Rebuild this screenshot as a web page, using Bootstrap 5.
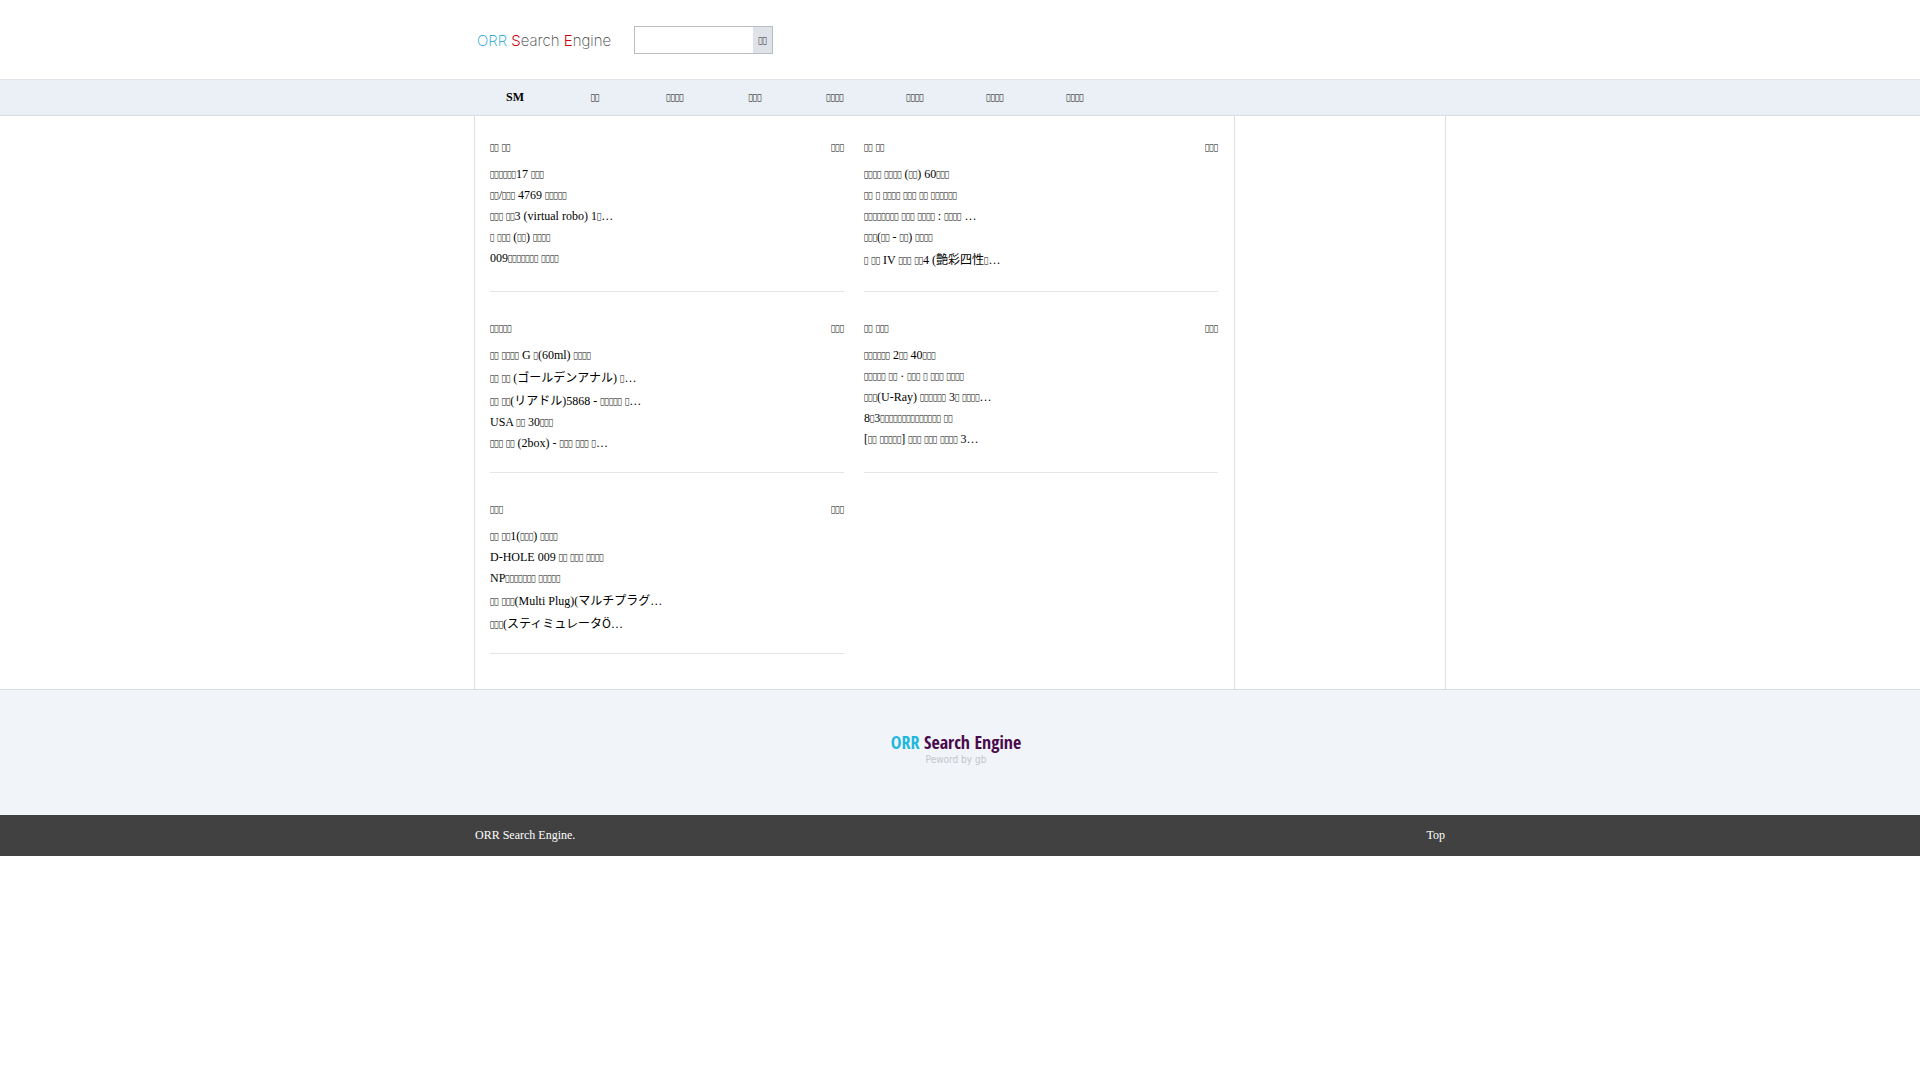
<!DOCTYPE html>
<html lang="ko">
<head>
<meta charset="utf-8">
<meta name="viewport" content="width=device-width, initial-scale=1">
<title>ORR Search Engine</title>
<link rel="stylesheet" href="https://cdn.jsdelivr.net/npm/bootstrap@5.3.0/dist/css/bootstrap.min.css">
<style>
body{font:12px/21px "Liberation Serif","Noto Sans CJK JP",serif;color:#000;background:#fff}
a{color:inherit;text-decoration:none}
.hg{font-family:"DejaVu Sans Condensed","DejaVu Sans",sans-serif;font-size:8px;line-height:1;vertical-align:1px;font-weight:400}
.wrap{width:100%;max-width:972px;margin:0 auto;padding:0 1px}
.top-area{padding:26px 0 25px}
.logo-top{font:200 15px/20px Inter,sans-serif;color:#444;padding:2px 0 0 2px;width:159px}
.logo-top .c-blue{color:#0a9fd8}
.logo-top .c-red{color:#d00010;font-weight:300}
.search-box{width:139px;height:28px;border:1px solid #b9bdc3}
.search-box input{width:118px;min-width:0;border:0;outline:0;padding:0 6px;background:#fff}
.search-box button{flex:0 0 19px;border:0;padding:0;background:#dfe3e9;color:#222}
.menu-bar{background:#ebeff6;border-top:1px solid #dfe3e8;border-bottom:1px solid #d8dde2}
.menu-bar a{width:80px;line-height:35px;text-align:center}
.frame{border:solid #dddfe3;border-width:0 1px;padding:0}
.main-col{flex:1;min-width:0;border-right:1px solid #dddfe3;padding:21px 16px 9px 15px;column-gap:20px}
.side-col{width:210px}
.board{flex:0 0 calc(50% - 10px);margin-bottom:26px;border-bottom:1px solid #e3e5e7}
.board h2{font:inherit;line-height:20px;margin:0}
.board header{line-height:20px;margin-bottom:6px}
.board ul{min-height:128px;padding-top:1px}
.board .jp{padding-top:2px}
.ja{font-family:"Noto Sans CJK JP",sans-serif;line-height:1}
.brand-area{background:#f1f5fa;border-top:1px solid #d8dde2;padding:41px 8px 48px 0}
.brand-name{font:700 18px/22px "Open Sans Condensed","Roboto Condensed",sans-serif;color:#4a0a4c}
.brand-name span{color:#1fb8dc}
.brand-sub{font:10px/14px "DejaVu Sans Condensed",sans-serif;color:#c4c6c9}
.foot{background:#414141;color:#fff;padding:10px 0}
</style>
<script src="https://cdn.jsdelivr.net/npm/bootstrap@5.3.0/dist/js/bootstrap.bundle.min.js"></script>
</head>
<body>
<header class="top-area">
  <div class="wrap d-flex align-items-center">
    <a href="#" class="logo-top text-nowrap"><span class="c-blue">ORR</span> <span class="c-red">S</span>earch <span class="c-red">E</span>ngine</a>
    <form class="search-box d-flex" onsubmit="return false">
      <input type="text" aria-label="Search">
      <button type="submit">▯▯</button>
    </form>
  </div>
</header>
<nav class="menu-bar">
  <div class="wrap d-flex">
    <a href="#" class="fw-bold">SM</a><a href="#">▯▯</a><a href="#">▯▯▯▯</a><a href="#">▯▯▯</a><a href="#">▯▯▯▯</a><a href="#">▯▯▯▯</a><a href="#">▯▯▯▯</a><a href="#">▯▯▯▯</a>
  </div>
</nav>
<div class="wrap frame d-flex">
  <main class="main-col d-flex flex-wrap">
    <section class="board">
      <header class="d-flex justify-content-between"><h2>▯▯ ▯▯</h2><a href="#">▯▯▯</a></header>
      <ul class="list-unstyled mb-0">
        <li><a href="#">▯▯▯▯▯▯17 ▯▯▯</a></li>
        <li><a href="#">▯▯/▯▯▯ 4769 ▯▯▯▯▯</a></li>
        <li><a href="#">▯▯▯ ▯▯3 (virtual robo) 1▯…</a></li>
        <li><a href="#">▯ ▯▯▯ (▯▯) ▯▯▯▯</a></li>
        <li><a href="#">009▯▯▯▯▯▯▯ ▯▯▯▯</a></li>
      </ul>
    </section>
    <section class="board">
      <header class="d-flex justify-content-between"><h2>▯▯ ▯▯</h2><a href="#">▯▯▯</a></header>
      <ul class="list-unstyled mb-0">
        <li><a href="#">▯▯▯▯ ▯▯▯▯ (▯▯) 60▯▯▯</a></li>
        <li><a href="#">▯▯ ▯ ▯▯▯▯ ▯▯▯ ▯▯ ▯▯▯▯▯▯</a></li>
        <li><a href="#">▯▯▯▯▯▯▯▯ ▯▯▯ ▯▯▯▯ : ▯▯▯▯ …</a></li>
        <li><a href="#">▯▯▯(▯▯ - ▯▯) ▯▯▯▯</a></li>
        <li class="jp"><a href="#">▯ ▯▯ IV ▯▯▯ ▯▯4 (<span class="ja">艶彩四性</span>▯…</a></li>
      </ul>
    </section>
    <section class="board">
      <header class="d-flex justify-content-between"><h2>▯▯▯▯▯</h2><a href="#">▯▯▯</a></header>
      <ul class="list-unstyled mb-0">
        <li><a href="#">▯▯ ▯▯▯▯ G ▯(60ml) ▯▯▯▯</a></li>
        <li class="jp"><a href="#">▯▯ ▯▯ (<span class="ja">ゴールデンアナル</span>) ▯…</a></li>
        <li class="jp"><a href="#">▯▯ ▯▯(<span class="ja">リアドル</span>)5868 - ▯▯▯▯▯ ▯…</a></li>
        <li><a href="#">USA ▯▯ 30▯▯▯</a></li>
        <li><a href="#">▯▯▯ ▯▯ (2box) - ▯▯▯ ▯▯▯ ▯…</a></li>
      </ul>
    </section>
    <section class="board">
      <header class="d-flex justify-content-between"><h2>▯▯ ▯▯▯</h2><a href="#">▯▯▯</a></header>
      <ul class="list-unstyled mb-0">
        <li><a href="#">▯▯▯▯▯▯ 2▯▯ 40▯▯▯</a></li>
        <li><a href="#">▯▯▯▯▯ ▯▯ · ▯▯▯ ▯ ▯▯▯ ▯▯▯▯</a></li>
        <li><a href="#">▯▯▯(U-Ray) ▯▯▯▯▯▯ 3▯ ▯▯▯▯…</a></li>
        <li><a href="#">8▯3▯▯▯▯▯▯▯▯▯▯▯▯▯▯ ▯▯</a></li>
        <li><a href="#">[▯▯ ▯▯▯▯▯] ▯▯▯ ▯▯▯ ▯▯▯▯ 3…</a></li>
      </ul>
    </section>
    <section class="board">
      <header class="d-flex justify-content-between"><h2>▯▯▯</h2><a href="#">▯▯▯</a></header>
      <ul class="list-unstyled mb-0">
        <li><a href="#">▯▯ ▯▯1(▯▯▯) ▯▯▯▯</a></li>
        <li><a href="#">D-HOLE 009 ▯▯ ▯▯▯ ▯▯▯▯</a></li>
        <li><a href="#">NP▯▯▯▯▯▯▯ ▯▯▯▯▯</a></li>
        <li class="jp"><a href="#">▯▯ ▯▯▯(Multi Plug)(<span class="ja">マルチプラグ</span>…</a></li>
        <li class="jp"><a href="#">▯▯▯(<span class="ja">スティミュレータÖ</span>…</a></li>
      </ul>
    </section>
  </main>
  <aside class="side-col"></aside>
</div>
<footer>
  <div class="brand-area text-center">
    <div class="brand-name"><span>ORR</span> Search Engine</div>
    <div class="brand-sub">Peword by gb</div>
  </div>
  <div class="foot">
    <div class="wrap d-flex justify-content-between"><span>ORR Search Engine.</span><a href="#">Top</a></div>
  </div>
</footer>
<script>
// Set each run of placeholder boxes in the small condensed face.
document.querySelectorAll('a, h2, button').forEach(function (el) {
  el.innerHTML = el.innerHTML.replace(/\u25AF+/g, function (run) {
    return '<span class="hg">' + '\uE000'.repeat(run.length) + '</span>';
  });
});
</script>
</body>
</html>
